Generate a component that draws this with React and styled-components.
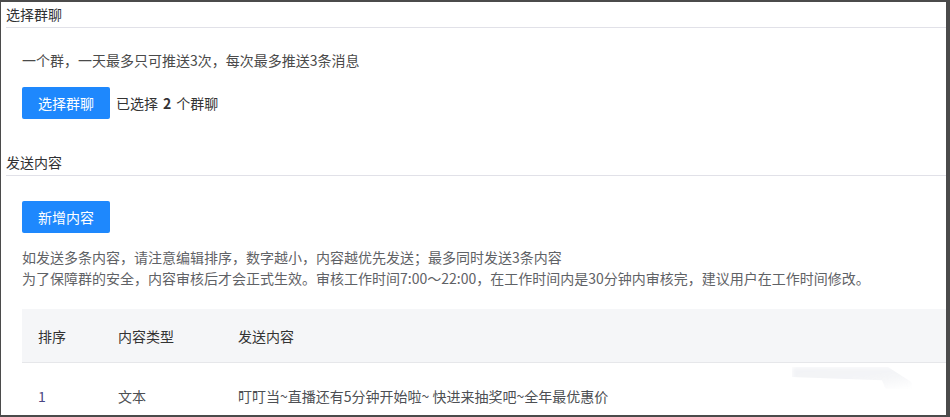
import React from 'react'
import styled, { createGlobalStyle } from 'styled-components'

const GlobalStyle = createGlobalStyle`
  html, body {
    margin: 0;
    padding: 0;
    background: #4b4b4b;
  }
  body {
    font-family: "Noto Sans CJK SC", "Noto Sans", sans-serif;
  }
`

const columns = [
  { key: 'order', title: '排序', width: 80 },
  { key: 'type', title: '内容类型', width: 120 },
  { key: 'content', title: '发送内容' },
]

const rows = [
  {
    order: '1',
    type: '文本',
    content: '叮叮当~直播还有5分钟开始啦~ 快进来抽奖吧~全年最优惠价',
  },
]

const App = () => {
  return (
    <>
      <GlobalStyle />
      <Frame>
        <Section>
          <SectionTitle>选择群聊</SectionTitle>
          <SectionBody top={22}>
            <Tip>一个群，一天最多只可推送3次，每次最多推送3条消息</Tip>
            <ActionRow>
              <PrimaryButton>选择群聊</PrimaryButton>
              <Selected>
                已选择<Count>2</Count>个群聊
              </Selected>
            </ActionRow>
          </SectionBody>
        </Section>

        <Section gap={31}>
          <SectionTitle>发送内容</SectionTitle>
          <SectionBody top={25}>
            <PrimaryButton>新增内容</PrimaryButton>
            <Notes>
              <Note>如发送多条内容，请注意编辑排序，数字越小，内容越优先发送；最多同时发送3条内容</Note>
              <Note>
                为了保障群的安全，内容审核后才会正式生效。审核工作时间7:00～22:00，在工作时间内是30分钟内审核完，建议用户在工作时间修改。
              </Note>
            </Notes>
            <Table>
              <HeadRow>
                {columns.map((c) => (
                  <HeadCell key={c.key} width={c.width}>
                    {c.title}
                  </HeadCell>
                ))}
              </HeadRow>
              {rows.map((r) => (
                <BodyRow key={r.order}>
                  {columns.map((c) => (
                    <Cell key={c.key} width={c.width} accent={c.key === 'order'}>
                      {r[c.key]}
                    </Cell>
                  ))}
                </BodyRow>
              ))}
              <Smudge />
            </Table>
          </SectionBody>
        </Section>
      </Frame>
    </>
  )
}

const Frame = styled.div`
  width: 950px;
  height: 417px;
  box-sizing: border-box;
  border-style: solid;
  border-color: #4b4b4b;
  border-width: 2px 4px 2px 1px;
  background: #fff;
  overflow: hidden;
  font-size: 14px;
`
const Section = styled.div`
  padding-left: 5px;
  margin-top: ${(props) => props.gap || 0}px;
`
const SectionTitle = styled.div`
  height: 25px;
  line-height: 25px;
  font-size: 14px;
  color: #303133;
  border-bottom: 1px solid #e1e1e8;
`
const SectionBody = styled.div`
  padding: ${(props) => props.top}px 0 0 16px;
`
const Tip = styled.div`
  line-height: 21px;
  color: #4a4a4a;
`
const ActionRow = styled.div`
  display: flex;
  align-items: center;
  margin-top: 16px;
`
const PrimaryButton = styled.button`
  width: 88px;
  height: 32px;
  border: none;
  border-radius: 2px;
  background: #1e88fd;
  color: #fff;
  font-family: inherit;
  font-size: 14px;
  padding: 0;
  cursor: pointer;
`
const Selected = styled.span`
  margin-left: 6px;
  color: #333;
  line-height: 21px;
`
const Count = styled.b`
  margin: 0 5px;
  font-weight: 700;
`
const Notes = styled.div`
  margin-top: 14px;
  color: #5f6266;
  line-height: 21px;
`
const Note = styled.div`
  white-space: nowrap;
`
const Table = styled.div`
  position: relative;
  margin-top: 20px;
`
const HeadRow = styled.div`
  display: flex;
  align-items: center;
  height: 53px;
  background: #f5f6f8;
  border-bottom: 1px solid #e6e7ea;
`
const BodyRow = styled.div`
  display: flex;
  align-items: center;
  padding-top: 23px;
  line-height: 21px;
`
const HeadCell = styled.div`
  box-sizing: border-box;
  padding-left: 16px;
  width: ${(props) => (props.width ? `${props.width}px` : 'auto')};
  flex: ${(props) => (props.width ? 'none' : '1')};
  color: #333;
`
const Cell = styled(HeadCell)`
  color: ${(props) => (props.accent ? '#4a4784' : '#4d4f53')};
`
const Smudge = styled.div`
  position: absolute;
  left: 770px;
  top: 58px;
  width: 120px;
  height: 22px;
  background: linear-gradient(170deg, #f2f3f6 0%, #f4f5f7 60%, rgba(244, 245, 247, 0) 100%);
  filter: blur(2px);
  clip-path: polygon(0 0, 80% 0, 100% 70%, 100% 100%, 78% 100%, 75% 60%, 0 45%);
`

export default App
